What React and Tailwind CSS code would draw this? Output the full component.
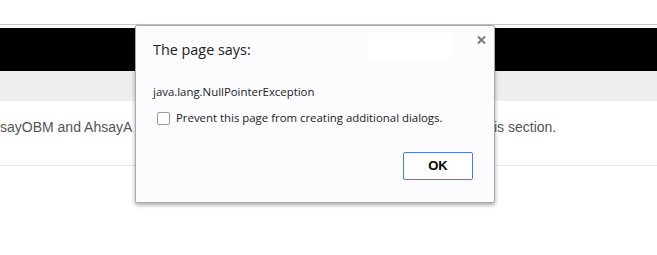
import { useState } from 'react'

export default function App() {
  const [checked, setChecked] = useState(false)

  return (
    <div className="relative w-[657px] h-[255px] bg-white overflow-hidden">
      {/* page behind the dialog */}
      <div className="h-[24px] bg-white" />
      <div className="h-px bg-[#c9c9c9]" />
      <div className="h-[3px] bg-white" />
      <div className="h-[43px] bg-black" />
      <div className="h-[30px] bg-[#eeeeee]" />
      <div className="h-[65px] pt-[18px] flex items-start border-b border-[#e6e6e6] text-[14px] leading-[16px] text-[#555555] whitespace-nowrap [font-family:'Liberation_Sans',Arial,sans-serif]">
        <span className="w-[135px]">sayOBM and AhsayA</span>
        <span className="w-[359px]" />
        <span>is section.</span>
      </div>

      {/* alert dialog */}
      <div className="absolute left-[135px] top-[25px] w-[360px] h-[178px] bg-[#fcfbfe] border border-[#a9a9a9] rounded-[2px] shadow-[0_2px_4px_rgba(0,0,0,0.35)] [font-family:'Open_Sans','Noto_Sans',sans-serif]">
        <div className="absolute left-[231px] top-[7px] w-[84px] h-[27px] bg-white" />
        <svg className="absolute left-[341px] top-[10px]" width="9" height="8" viewBox="0 0 9 8">
          <path d="M1 0.5 L8 7.5 M8 0.5 L1 7.5" stroke="#7a7a7a" strokeWidth="2" />
        </svg>
        <div className="relative flex flex-col pl-[17px] pr-[21px] pt-[14px]">
          <div className="h-[20px] leading-[20px] text-[14.4px] text-[#222222]">The page says:</div>
          <div className="mt-[24px] h-[16px] leading-[16px] text-[11.4px] text-[#222222]">java.lang.NullPointerException</div>
          <label className="mt-[10px] h-[16px] flex items-center gap-[6px] text-[11.4px] text-[#222222] cursor-pointer">
            <span
              onClick={() => setChecked(!checked)}
              className="ml-[4px] w-[13px] h-[13px] border border-[#9a9a9a] rounded-[2px] bg-white"
            />
            Prevent this page from creating additional dialogs.
          </label>
          <div className="mt-[26px] flex justify-end">
            <button className="w-[70px] h-[28px] bg-white border border-[#4d7fcf] rounded-[2px] text-[13px] font-bold text-black [font-family:'Liberation_Sans',Arial,sans-serif]">
              OK
            </button>
          </div>
        </div>
      </div>
    </div>
  )
}
